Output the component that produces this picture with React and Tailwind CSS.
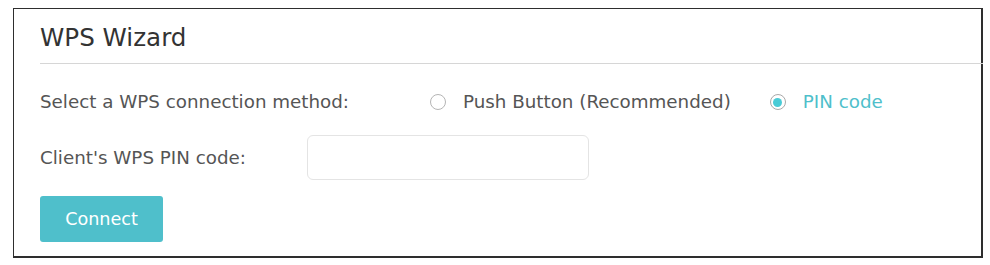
import { useState } from "react";

function Radio({ checked, label, onClick }) {
  return (
    <label className="flex items-center cursor-pointer" onClick={onClick}>
      <span
        className={`flex items-center justify-center w-[16px] h-[16px] rounded-full border ${
          checked ? "border-[#a9a9a9]" : "border-[#b5b5b5]"
        }`}
      >
        {checked && <span className="w-[9px] h-[9px] rounded-full bg-[#4acbd6]" />}
      </span>
      <span className={`ml-[17px] ${checked ? "text-[#4fbfcb]" : "text-[#555]"}`}>{label}</span>
    </label>
  );
}

export default function App() {
  const [method, setMethod] = useState("pin");
  const [pin, setPin] = useState("");

  return (
    <div className="w-[990px] h-[265px] bg-white pt-[8px] pl-[13px] font-['DejaVu_Sans',Verdana,sans-serif]">
      <div className="w-[970px] h-[250px] border border-[#2e2e2e] border-r-2 border-b-2 pl-[26px]">
        {/* Header */}
        <h1 className="pt-[14px] h-[54px] text-[24.6px] leading-[30px] text-[#333] font-normal">WPS Wizard</h1>
        <div className="h-px bg-[#d6d6d6] mr-[-2px]" />

        {/* Method */}
        <div className="flex items-center h-[28px] mt-[24px] text-[18.3px] text-[#555]">
          <span className="w-[390px]">Select a WPS connection method:</span>
          <Radio
            label="Push Button (Recommended)"
            checked={method === "push"}
            onClick={() => setMethod("push")}
          />
          <div className="w-[39px]" />
          <Radio label="PIN code" checked={method === "pin"} onClick={() => setMethod("pin")} />
        </div>

        {/* PIN */}
        <div className="flex items-center mt-[19px] text-[18.3px] text-[#555]">
          <span className="w-[267px]">Client's WPS PIN code:</span>
          <input
            value={pin}
            onChange={(e) => setPin(e.target.value)}
            className="w-[282px] h-[45px] rounded-[6px] border border-[#e4e4e4] px-3 outline-none"
          />
        </div>

        {/* Button */}
        <button className="mt-[16px] w-[123px] h-[46px] rounded-[3px] bg-[#4fbfcb] text-white text-[17.6px]">
          Connect
        </button>
      </div>
    </div>
  );
}
